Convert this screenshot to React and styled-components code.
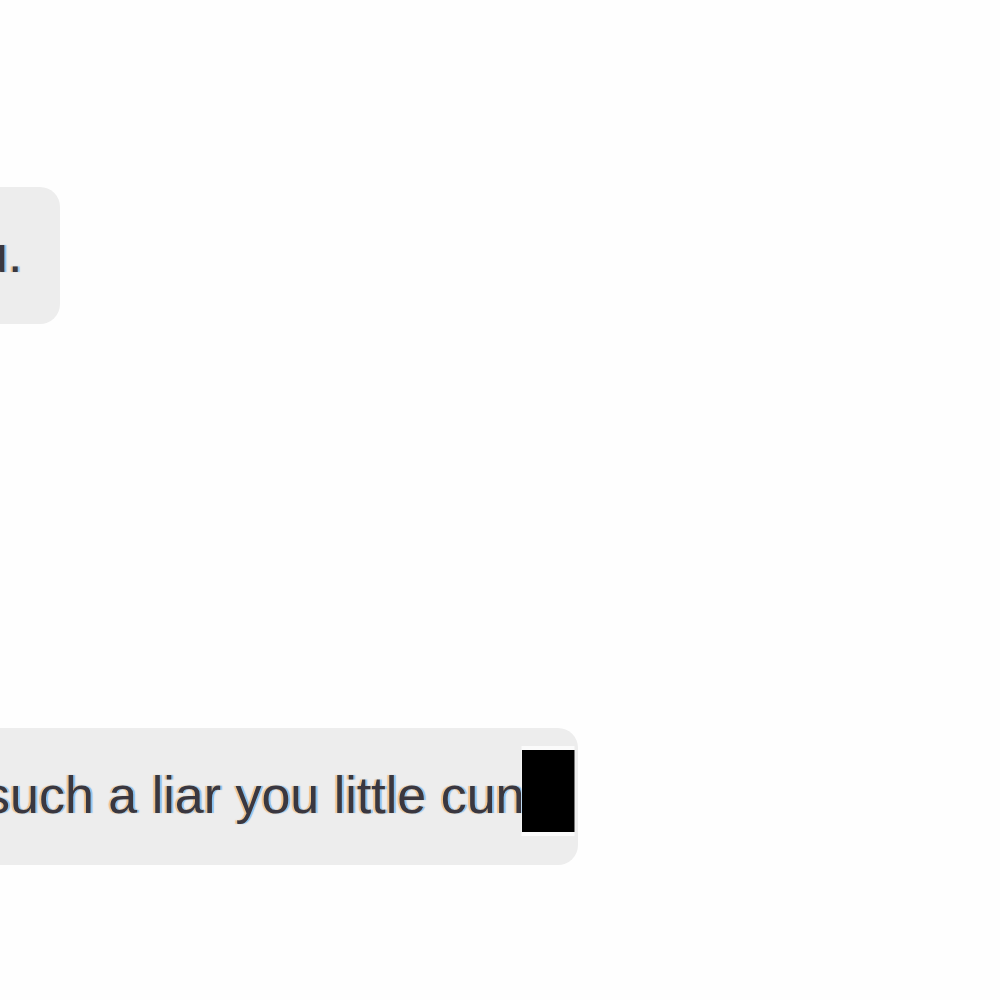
import React from 'react'
import styled, { createGlobalStyle } from 'styled-components'

const GlobalStyle = createGlobalStyle`
    body{
        margin:0;
        background:#fefefe;
        overflow-x:hidden;
    }
`;

const Chat = styled.main`
    display:flex;
    flex-direction:column;
    align-items:flex-start;
    gap:404px;
    padding:187px 0px 135px;
    overflow:hidden;
    font-family:"Liberation Sans", Arial, sans-serif;
`;

const Bubble = styled.div`
    position:relative;
    margin-left:${props => props.$start}px;
    padding:39px ${props => props.$masked ? 53 : 38}px 41px 40px;
    border-radius:20px;
    background:#ededed;
`;

const Message = styled.p`
    margin:0;
    color:#3a3740;
    font-size:52px;
    line-height:57px;
    white-space:nowrap;
    text-shadow:-2px 0 1px rgba(245,165,70,0.6), 2px 0 1px rgba(70,165,245,0.6);
`;

// covers the end of a message
const Mask = styled.span`
    position:absolute;
    top:22px;
    right:3px;
    bottom:33px;
    width:53px;
    background:#000;
    box-shadow:0 0 0 4px #fbfbfb;
    clip-path:inset(-4px 0px -4px 0px);
`;

const messages = [
    { text: 'u.', start: -61 },
    { text: 'such a liar you little cun', start: -56, masked: true },
]

const App = () => {
  return (
    <>
        <GlobalStyle />
        <Chat>
            {messages.map(({ text, start, masked }) => (
                <Bubble key={text} $start={start} $masked={masked}>
                    <Message>{text}</Message>
                    {masked && <Mask />}
                </Bubble>
            ))}
        </Chat>
    </>
  )
}

export default App
